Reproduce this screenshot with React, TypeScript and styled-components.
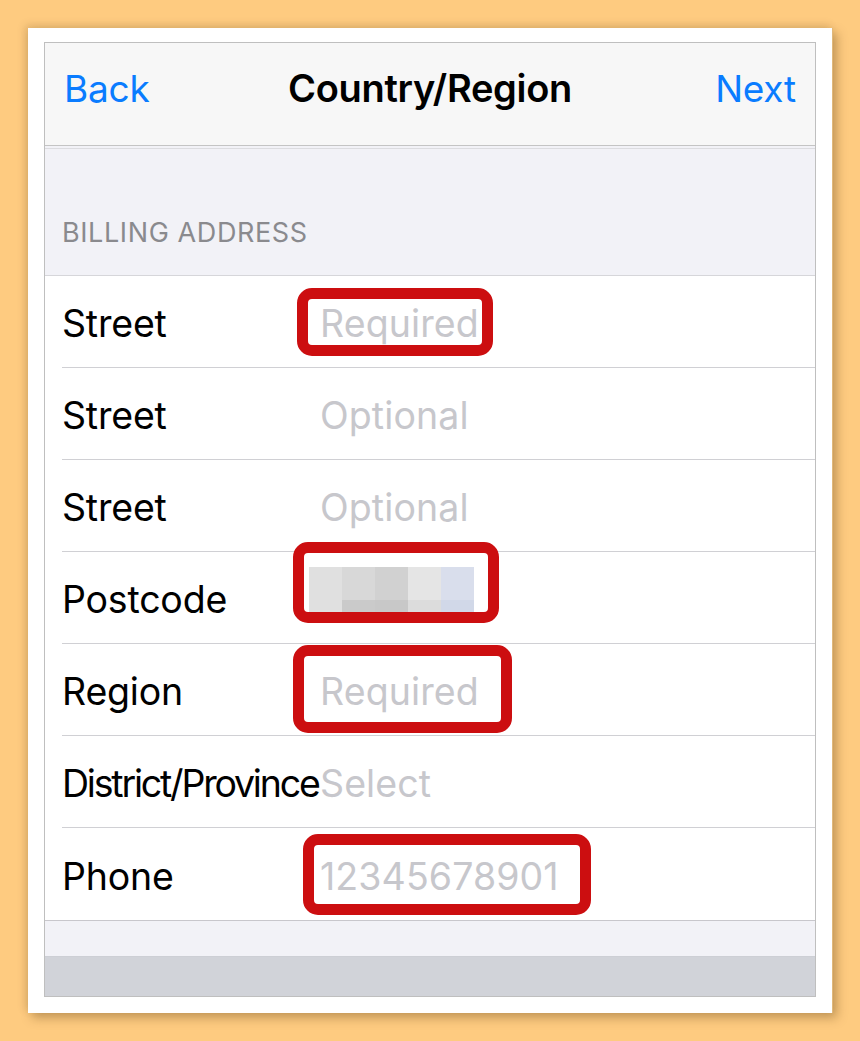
import React from "react";
import styled, { createGlobalStyle } from "styled-components";

const Global = createGlobalStyle`
  html, body { margin: 0; padding: 0; }
  body {
    background: #fecb80;
    font-family: Inter, "Noto Sans", "Liberation Sans", sans-serif;
    -webkit-font-smoothing: antialiased;
  }
`;

const Page = styled.div`
  padding: 28px 27px 28px 28px;
  height: 1041px;
  box-sizing: border-box;
`;

const Card = styled.div`
  width: 805px;
  height: 985px;
  box-sizing: border-box;
  background: #ffffff;
  padding: 14px 16px 16px 16px;
  box-shadow: 4px 5px 10px rgba(90, 60, 20, 0.35), -3px -3px 8px rgba(90, 60, 20, 0.16);
  border-right: 1px solid #e0b87a;
`;

const Screen = styled.div`
  height: 100%;
  box-sizing: border-box;
  border: 1px solid #bfbfbf;
  background: #f2f2f7;
  display: flex;
  flex-direction: column;
  overflow: hidden;
`;

const NavBar = styled.div`
  height: 103px;
  flex: none;
  background: #f7f7f7;
  border-bottom: 1px solid #c4c4c4;
  display: grid;
  grid-template-columns: 1fr auto 1fr;
  align-items: center;
  padding: 0 19px 12px;
  box-sizing: border-box;
`;

const NavButton = styled.span<{ $align: "left" | "right" }>`
  color: #0a7cff;
  font-size: 37px;
  letter-spacing: -0.2px;
  justify-self: ${(p) => (p.$align === "left" ? "start" : "end")};
`;

const NavTitle = styled.span`
  color: #000;
  font-size: 38px;
  font-weight: 600;
  letter-spacing: -0.3px;
`;

const SectionHeader = styled.div`
  height: 128px;
  flex: none;
  box-sizing: border-box;
  margin-top: 2px;
  border-top: 1px solid #dcdce0;
  border-bottom: 1px solid #d6d6da;
  display: flex;
  align-items: flex-end;
  padding: 0 17px 26px;
  color: #8a8a8e;
  font-size: 27px;
  letter-spacing: 0.6px;
`;

const List = styled.div`
  background: #ffffff;
  flex: none;
  border-bottom: 1px solid #c8c7cc;
`;

const Row = styled.div`
  position: relative;
  padding-left: 17px;
`;

const RowInner = styled.div<{ $last?: boolean }>`
  height: 92px;
  box-sizing: border-box;
  display: grid;
  grid-template-columns: 258px 1fr;
  align-items: center;
  border-bottom: ${(p) => (p.$last ? "none" : "1px solid #d0d0d4")};
  padding-top: 4px;
`;

const Label = styled.span<{ $tight?: boolean }>`
  color: #000;
  font-size: 37.5px;
  letter-spacing: ${(p) => (p.$tight ? "-2.2px" : "-0.2px")};
  white-space: nowrap;
`;

const Value = styled.span`
  color: #c7c7cc;
  font-size: 37.5px;
  letter-spacing: 0.1px;
  white-space: nowrap;
`;

const Highlight = styled.div`
  position: absolute;
  box-sizing: border-box;
  border: 11px solid #cc0e10;
  border-radius: 15px;
  z-index: 2;
  pointer-events: none;
`;

const Pixels = styled.div`
  display: grid;
  grid-template-columns: repeat(5, 33px);
  grid-template-rows: 33px 13px;
  align-self: start;
  margin-top: 11px;
  margin-left: -11px;
`;

const Pixel = styled.div<{ $c: string }>`
  background: ${(p) => p.$c};
`;

const Footer = styled.div`
  height: 35px;
  flex: none;
  background: #f2f2f7;
`;

const Keyboard = styled.div`
  flex: 1;
  background: #d1d3d9;
  border-top: 1px solid #cdcfd5;
`;

const pixelColors = [
  "#e0e0e0", "#d8d8d8", "#d1d1d1", "#e5e5e5", "#d9deec",
  "#e0e0e0", "#cacaca", "#c8c8c8", "#dcdcdc", "#d1d8e8",
];

type Box = { left: number; top: number; width: number; height: number };

const rows: { label: string; value?: string; pixels?: boolean; tight?: boolean; box?: Box }[] = [
  { label: "Street", value: "Required", box: { left: 252, top: 12, width: 196, height: 68 } },
  { label: "Street", value: "Optional" },
  { label: "Street", value: "Optional" },
  { label: "Postcode", pixels: true, box: { left: 248, top: -10, width: 206, height: 81 } },
  { label: "Region", value: "Required", box: { left: 248, top: 1, width: 219, height: 88 } },
  { label: "District/Province", value: "Select", tight: true },
  { label: "Phone", value: "12345678901", box: { left: 258, top: 6, width: 288, height: 81 } },
];

export default function App() {
  return (
    <>
      <Global />
      <Page>
        <Card>
          <Screen>
            <NavBar>
              <NavButton $align="left">Back</NavButton>
              <NavTitle>Country/Region</NavTitle>
              <NavButton $align="right">Next</NavButton>
            </NavBar>
            <SectionHeader>BILLING ADDRESS</SectionHeader>
            <List>
              {rows.map((r, i) => (
                <Row key={i}>
                  <RowInner $last={i === rows.length - 1}>
                    <Label $tight={r.tight}>{r.label}</Label>
                    {r.pixels ? (
                      <Pixels>
                        {pixelColors.map((c, j) => (
                          <Pixel key={j} $c={c} />
                        ))}
                      </Pixels>
                    ) : (
                      <Value>{r.value}</Value>
                    )}
                  </RowInner>
                  {r.box && (
                    <Highlight
                      style={{
                        left: r.box.left,
                        top: r.box.top,
                        width: r.box.width,
                        height: r.box.height,
                      }}
                    />
                  )}
                </Row>
              ))}
            </List>
            <Footer />
            <Keyboard />
          </Screen>
        </Card>
      </Page>
    </>
  );
}
